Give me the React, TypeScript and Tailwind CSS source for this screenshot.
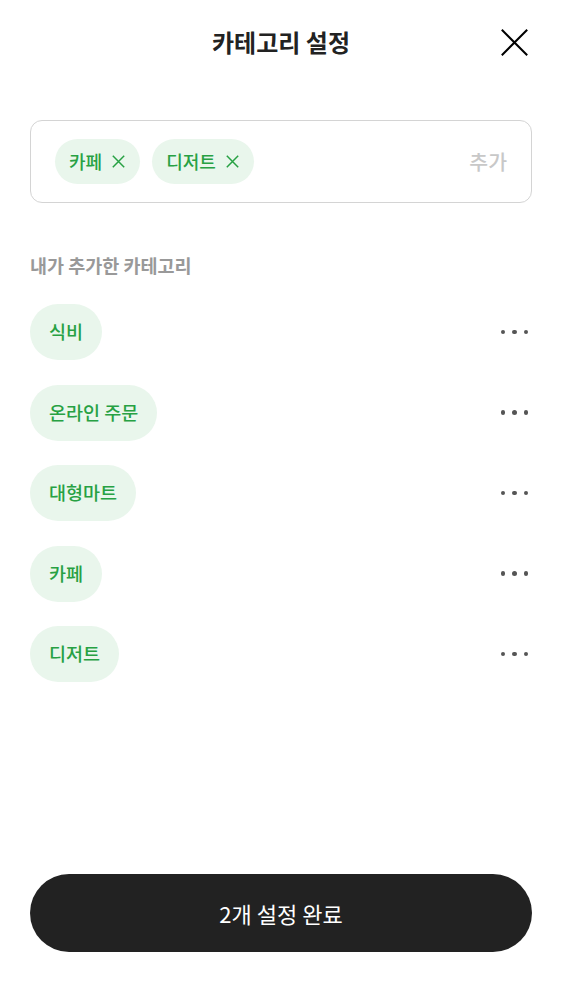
const myCategories = ['식비', '온라인 주문', '대형마트', '카페', '디저트'];
const selected = ['카페', '디저트'];

const CloseIcon = ({ size, stroke }: { size: number; stroke: number }) => (
  <svg width={size} height={size} viewBox={`0 0 ${size} ${size}`} fill="none">
    <path
      d={`M0.8 0.8 L${size - 0.8} ${size - 0.8} M${size - 0.8} 0.8 L0.8 ${size - 0.8}`}
      stroke="currentColor"
      strokeWidth={stroke}
    />
  </svg>
);

const MoreDots = () => (
  <button className="flex h-8 w-10 items-center justify-end gap-[7px] pr-1">
    <span className="h-[4.5px] w-[4.5px] rounded-full bg-[#555555]" />
    <span className="h-[4.5px] w-[4.5px] rounded-full bg-[#555555]" />
    <span className="h-[4.5px] w-[4.5px] rounded-full bg-[#555555]" />
  </button>
);

const App = () => {
  return (
    <div
      className="flex h-[1000px] flex-col bg-white px-[30px]"
      style={{ fontFamily: '"Noto Sans CJK KR", "Noto Sans", sans-serif' }}
    >
      {/* 헤더 */}
      <div className="grid h-[84px] grid-cols-[1fr_auto_1fr] items-center">
        <div />
        <h1 className="text-[24px] font-bold text-[#222222]">카테고리 설정</h1>
        <div className="flex justify-end pr-[4px] text-black">
          <CloseIcon size={27} stroke={2} />
        </div>
      </div>

      {/* 선택된 카테고리 */}
      <div className="mt-[36px] flex h-[83px] items-center gap-3 rounded-xl border border-[#d4d4d4] pl-6 pr-6">
        {selected.map((name) => (
          <div
            key={name}
            className="flex h-[45px] items-center gap-[10px] rounded-full bg-[#e9f6ec] pl-[14px] pr-[15px] text-[18px] font-medium text-[#27a143]"
          >
            <span>{name}</span>
            <CloseIcon size={13} stroke={1.5} />
          </div>
        ))}
        <span className="ml-auto text-[20.5px] font-medium text-[#c8c8c8]">추가</span>
      </div>

      {/* 내가 추가한 카테고리 */}
      <div className="mt-[50px] text-[18.5px] leading-[24px] font-semibold text-[#999999]">
        내가 추가한 카테고리
      </div>
      <div className="mt-[27px] flex flex-col gap-[24.5px]">
        {myCategories.map((name) => (
          <div key={name} className="flex items-center justify-between">
            <div className="flex h-[56px] items-center rounded-full bg-[#e9f6ec] px-[19px] text-[18.5px] font-medium text-[#27a143]">
              {name}
            </div>
            <MoreDots />
          </div>
        ))}
      </div>

      {/* 완료 버튼 */}
      <button className="mt-auto mb-[48px] flex h-[78px] w-full items-center justify-center rounded-full bg-[#222222] text-[22px] font-normal text-white">
        2개 설정 완료
      </button>
    </div>
  );
};

export default App;
